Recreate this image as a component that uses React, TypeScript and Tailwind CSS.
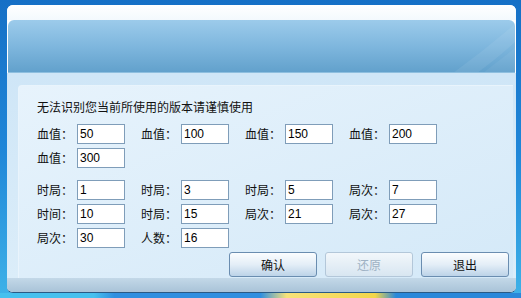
import React from 'react'

type Field = { label: string; value: string }

const topRows: Field[][] = [
  [
    { label: '血值：', value: '50' },
    { label: '血值：', value: '100' },
    { label: '血值：', value: '150' },
    { label: '血值：', value: '200' },
  ],
  [{ label: '血值：', value: '300' }],
]

const bottomRows: Field[][] = [
  [
    { label: '时局：', value: '1' },
    { label: '时局：', value: '3' },
    { label: '时局：', value: '5' },
    { label: '局次：', value: '7' },
  ],
  [
    { label: '时间：', value: '10' },
    { label: '时局：', value: '15' },
    { label: '局次：', value: '21' },
    { label: '局次：', value: '27' },
  ],
  [
    { label: '局次：', value: '30' },
    { label: '人数：', value: '16' },
  ],
]

function FieldRow({ fields }: { fields: Field[] }): React.JSX.Element {
  return (
    <div className="grid grid-cols-[104px_104px_104px_104px] h-[20px]">
      {fields.map((f, i) => (
        <div key={i} className="flex items-center">
          <span className="w-[40px] text-[12px] leading-[20px] text-[#111]">{f.label}</span>
          <input
            readOnly
            value={f.value}
            className="w-[48px] h-[20px] bg-white border border-[#7f9db9] px-[2px] text-[12px] text-black outline-none font-['Liberation_Sans',sans-serif]"
          />
        </div>
      ))}
    </div>
  )
}

function Button({ label, disabled }: { label: string; disabled?: boolean }): React.JSX.Element {
  return (
    <button
      className={
        disabled
          ? 'w-[88px] h-[25px] rounded-[3px] border border-[#b3c7d9] bg-gradient-to-b from-[#f2f7fb] to-[#d8e6f1] text-[12px] text-[#9fb2c4]'
          : 'w-[88px] h-[25px] rounded-[3px] border border-[#6a8db0] bg-gradient-to-b from-[#fbfdff] via-[#e4eef7] to-[#bcd3e8] text-[12px] text-[#111]'
      }
    >
      {label}
    </button>
  )
}

export default function App(): React.JSX.Element {
  return (
    <div className="w-[521px] h-[298px] overflow-hidden bg-gradient-to-b from-[#1670c6] via-[#1f86d8] to-[#3fb2e8] flex flex-col font-['Noto_Sans_CJK_SC',sans-serif]">
      <div className="pl-[7px] pt-[5px]">
        <div className="w-[509px] h-[288px] rounded-[6px] overflow-hidden flex flex-col bg-white border-b border-[#2a5a85]">
          <div className="h-[15px] bg-gradient-to-b from-[#ffffff] to-[#f3f9fd]" />
          <div className="relative h-[53px] mx-[1px] rounded-t-[6px] bg-gradient-to-b from-[#9ccbeb] via-[#7fb7de] to-[#62a1cc] border-b border-[#8ebfdf] overflow-hidden">
            <svg className="absolute right-0 top-0" width="80" height="53" viewBox="0 0 80 53">
              <path d="M18 53 Q50 30 80 4 L80 22 Q60 40 42 53 Z" fill="#ffffff" opacity="0.07" />
              <path d="M48 53 L80 28 L80 53 Z" fill="#ffffff" opacity="0.05" />
            </svg>
          </div>
          <div className="h-[205px] bg-gradient-to-b from-[#cfe6f7] to-[#dbedf9] flex flex-col">
            <div className="ml-[11px] mt-[12px] mr-[3px] flex-1 rounded-tl-[4px] bg-gradient-to-br from-[#e7f3fc] to-[#d4e9f8] border-l border-t border-[#e9f4fc] pl-[18px] pt-[13px]">
              <div className="text-[12px] leading-[16px] text-[#111]">无法识别您当前所使用的版本请谨慎使用</div>
              <div className="mt-[9px] flex flex-col gap-[4px]">
                {topRows.map((r, i) => (
                  <FieldRow key={i} fields={r} />
                ))}
              </div>
              <div className="mt-[12px] flex flex-col gap-[4px]">
                {bottomRows.map((r, i) => (
                  <FieldRow key={i} fields={r} />
                ))}
              </div>
              <div className="mt-[4px] flex justify-end gap-[8px] pr-[4px]">
                <Button label="确认" />
                <Button label="还原" disabled />
                <Button label="退出" />
              </div>
            </div>
          </div>
          <div className="flex-1 bg-gradient-to-b from-[#c3d8e8] to-[#a9c3d8]" />
        </div>
      </div>
      <div className="flex-1 bg-[linear-gradient(90deg,#46c0ee_0%,#46c0ee_18%,#2f8fe0_22%,#2f8fe0_50%,#f7e27a_55%,#f3d64a_72%,#2a88da_76%,#2a88da_100%)]" />
    </div>
  )
}
